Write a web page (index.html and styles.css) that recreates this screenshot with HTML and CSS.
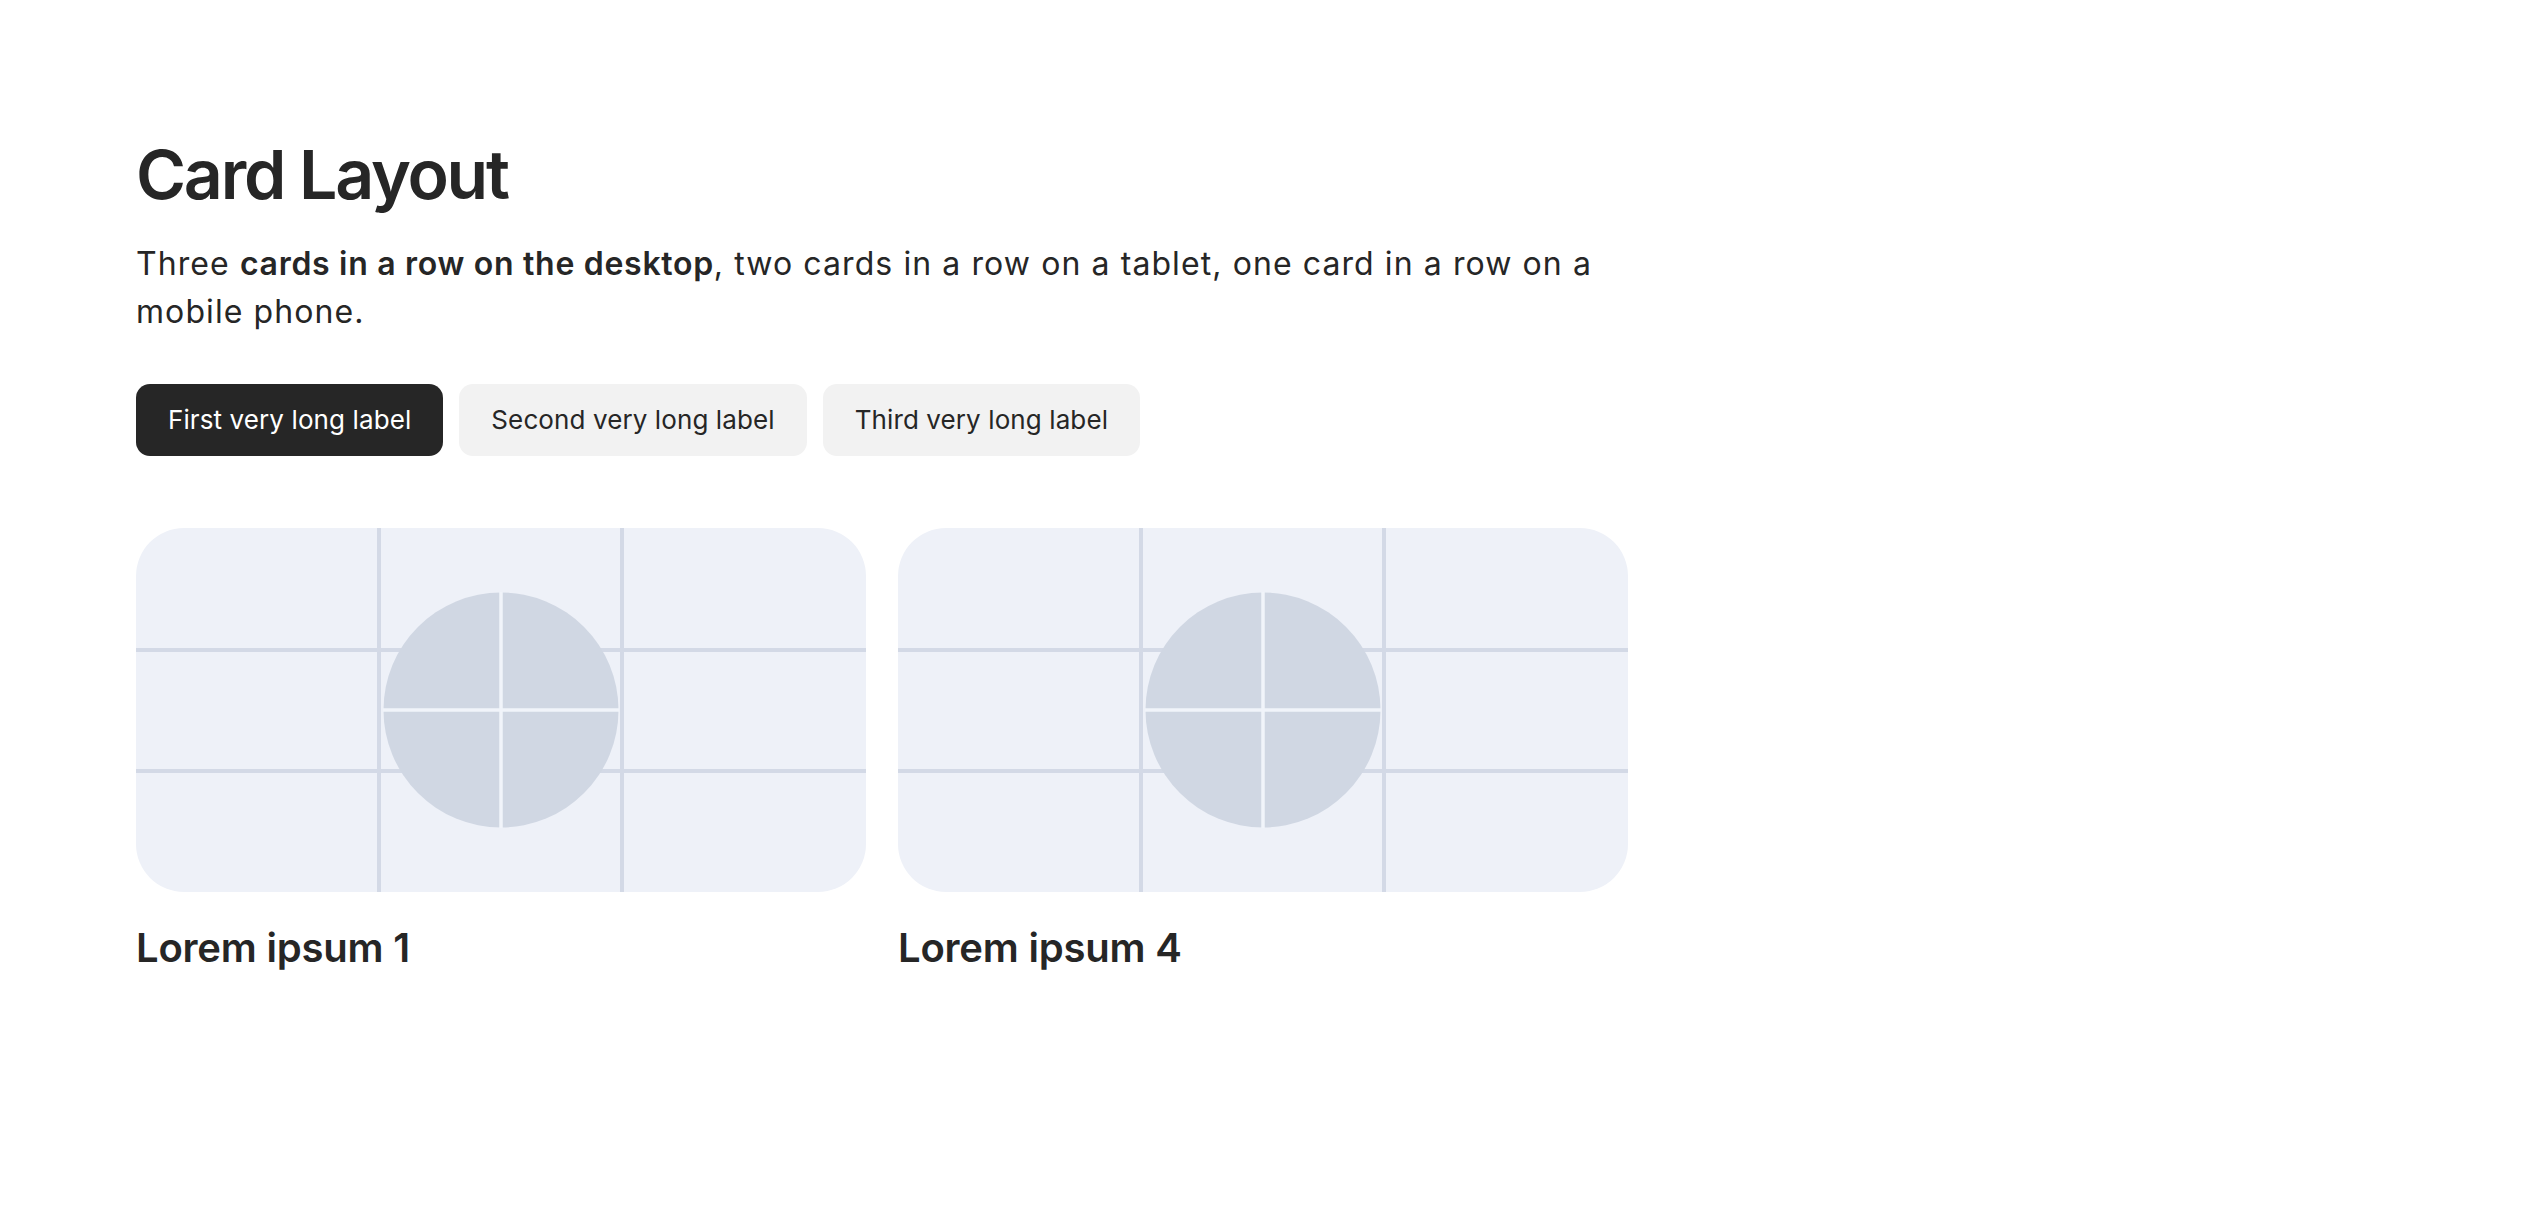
FILE: index.html
```html
<!DOCTYPE html>
<html lang="en">
<head>
<meta charset="utf-8">
<title>Card Layout</title>
<link rel="stylesheet" href="styles.css">
</head>
<body>
<main class="page">
  <h1 class="title">Card Layout</h1>
  <p class="lead">Three <strong>cards in a row on the desktop</strong>, two cards in a row on a tablet, one card in a row on a mobile phone.</p>
  <div class="tabs">
    <button class="tab tab-active">First very long label</button>
    <button class="tab">Second very long label</button>
    <button class="tab">Third very long label</button>
  </div>
  <div class="cards">
    <article class="card">
      <div class="card-media">
        <svg class="placeholder" viewBox="0 0 730 364" preserveAspectRatio="none">
          <rect width="730" height="364" fill="#eef1f8"/>
          <g stroke="#d3d9e6" stroke-width="4">
            <line x1="243" y1="0" x2="243" y2="364"/>
            <line x1="486" y1="0" x2="486" y2="364"/>
            <line x1="0" y1="122" x2="730" y2="122"/>
            <line x1="0" y1="243" x2="730" y2="243"/>
          </g>
          <circle cx="365" cy="182" r="117.5" fill="#d0d7e3"/>
          <g stroke="#f1f4fa" stroke-width="3.5">
            <line x1="365" y1="64" x2="365" y2="300"/>
            <line x1="247" y1="182" x2="483" y2="182"/>
          </g>
        </svg>
      </div>
      <h2 class="card-title">Lorem ipsum 1</h2>
    </article>
    <article class="card">
      <div class="card-media">
        <svg class="placeholder" viewBox="0 0 730 364" preserveAspectRatio="none">
          <rect width="730" height="364" fill="#eef1f8"/>
          <g stroke="#d3d9e6" stroke-width="4">
            <line x1="243" y1="0" x2="243" y2="364"/>
            <line x1="486" y1="0" x2="486" y2="364"/>
            <line x1="0" y1="122" x2="730" y2="122"/>
            <line x1="0" y1="243" x2="730" y2="243"/>
          </g>
          <circle cx="365" cy="182" r="117.5" fill="#d0d7e3"/>
          <g stroke="#f1f4fa" stroke-width="3.5">
            <line x1="365" y1="64" x2="365" y2="300"/>
            <line x1="247" y1="182" x2="483" y2="182"/>
          </g>
        </svg>
      </div>
      <h2 class="card-title">Lorem ipsum 4</h2>
    </article>
  </div>
</main>
</body>
</html>
```

FILE: styles.css
```css
html, body {
  margin: 0;
  padding: 0;
  background: #ffffff;
}

body {
  font-family: Inter, "Noto Sans", sans-serif;
  color: #262626;
}

.page {
  width: 1492px;
  padding: 132px 0 0 136px;
}

.title {
  margin: 0;
  font-size: 68px;
  line-height: 84px;
  font-weight: 600;
  letter-spacing: -0.033em;
}

.lead {
  margin: 24px 0 0 0;
  font-size: 32px;
  line-height: 48px;
  font-weight: 400;
  letter-spacing: 0.034em;
  max-width: 1492px;
}

.lead strong {
  font-weight: 600;
  letter-spacing: 0.022em;
}

.tabs {
  display: flex;
  gap: 16px;
  margin-top: 48px;
}

.tab {
  font-family: Inter, "Noto Sans", sans-serif;
  font-size: 26px;
  line-height: 32px;
  letter-spacing: 0.004em;
  padding: 20px 32px;
  border: none;
  border-radius: 14px;
  background: #f2f2f2;
  color: #262626;
  cursor: pointer;
}

.tab-active {
  background: #262626;
  color: #ffffff;
}

.cards {
  display: grid;
  grid-template-columns: repeat(2, 1fr);
  gap: 32px;
  margin-top: 72px;
}

.card-media {
  border-radius: 48px;
  overflow: hidden;
  aspect-ratio: 730 / 364;
}

.placeholder {
  display: block;
  width: 100%;
  height: 100%;
}

.card-title {
  margin: 30px 0 0 0;
  font-size: 40px;
  line-height: 52px;
  font-weight: 600;
  letter-spacing: -0.005em;
}
```
